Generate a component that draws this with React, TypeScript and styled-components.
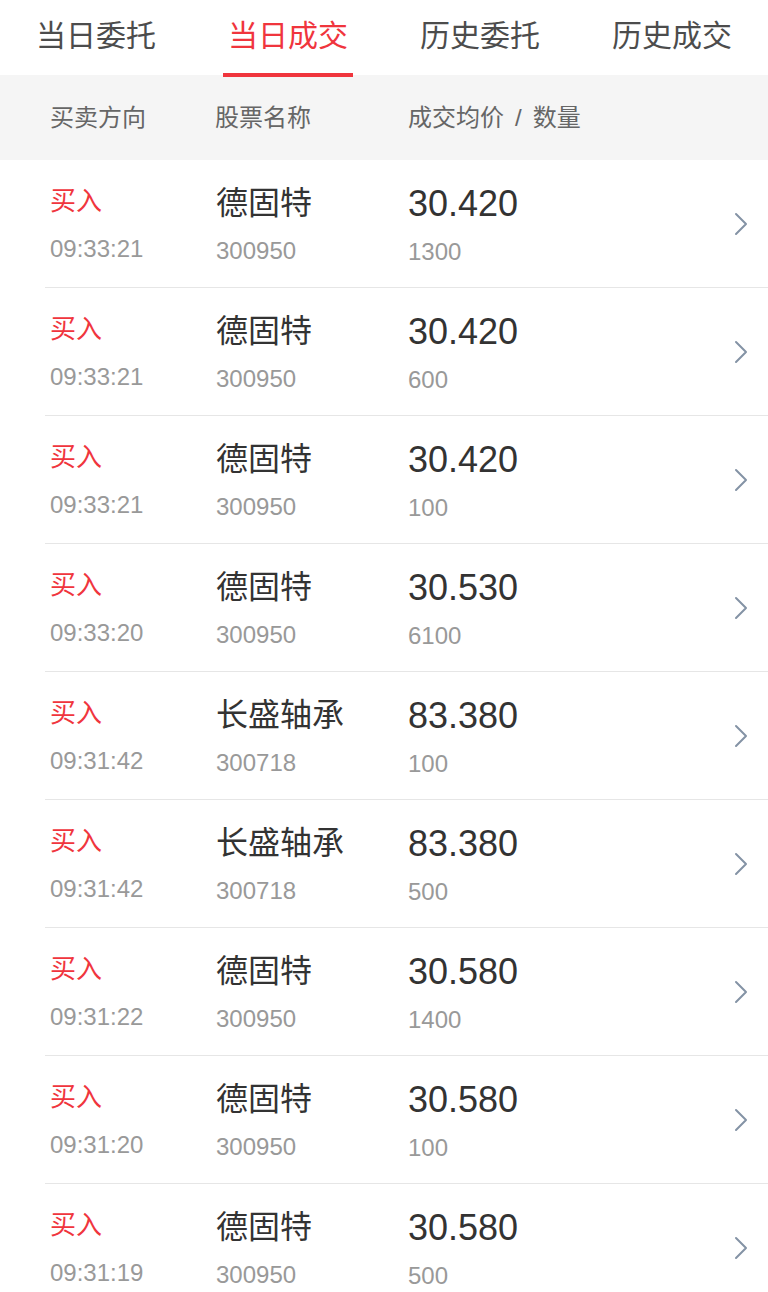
import React, { useState } from "react";
import styled, { createGlobalStyle } from "styled-components";

interface ITrade {
  time: string;
  name: string;
  code: string;
  price: string;
  volume: string;
}

interface ITabLabel {
  active: boolean;
}

const tabs = ["当日委托", "当日成交", "历史委托", "历史成交"];

const trades: ITrade[] = [
  { time: "09:33:21", name: "德固特", code: "300950", price: "30.420", volume: "1300" },
  { time: "09:33:21", name: "德固特", code: "300950", price: "30.420", volume: "600" },
  { time: "09:33:21", name: "德固特", code: "300950", price: "30.420", volume: "100" },
  { time: "09:33:20", name: "德固特", code: "300950", price: "30.530", volume: "6100" },
  { time: "09:31:42", name: "长盛轴承", code: "300718", price: "83.380", volume: "100" },
  { time: "09:31:42", name: "长盛轴承", code: "300718", price: "83.380", volume: "500" },
  { time: "09:31:22", name: "德固特", code: "300950", price: "30.580", volume: "1400" },
  { time: "09:31:20", name: "德固特", code: "300950", price: "30.580", volume: "100" },
  { time: "09:31:19", name: "德固特", code: "300950", price: "30.580", volume: "500" }
];

const App: React.FC = () => {
  const [current, setCurrent] = useState(1);

  return (
    <Page>
      <GlobalStyle />
      <TabBar>
        {tabs.map((t, i) => (
          <Tab key={t} onClick={() => setCurrent(i)}>
            <TabLabel active={i === current}>{t}</TabLabel>
          </Tab>
        ))}
      </TabBar>
      <HeaderRow>
        <HeaderCell>买卖方向</HeaderCell>
        <HeaderCell>股票名称</HeaderCell>
        <HeaderCell>
          成交均价<Slash>/</Slash>数量
        </HeaderCell>
      </HeaderRow>
      <List>
        {trades.map((t, i) => (
          <Row key={i}>
            <Cell>
              <Direction>买入</Direction>
              <Sub>{t.time}</Sub>
            </Cell>
            <Cell>
              <Name>{t.name}</Name>
              <Sub>{t.code}</Sub>
            </Cell>
            <Cell>
              <Price>{t.price}</Price>
              <Sub>{t.volume}</Sub>
            </Cell>
            <Chevron width="14" height="24" viewBox="0 0 14 24">
              <path
                d="M2 2 L12 12 L2 22"
                fill="none"
                stroke="#8493a5"
                strokeWidth="2"
                strokeLinecap="round"
                strokeLinejoin="round"
              />
            </Chevron>
          </Row>
        ))}
      </List>
    </Page>
  );
};

const GlobalStyle = createGlobalStyle`
  html, body {
    margin: 0;
    padding: 0;
    background: #ffffff;
  }
  body {
    font-family: "Liberation Sans", "Noto Sans CJK SC", sans-serif;
    -webkit-font-smoothing: antialiased;
  }
`;

const Page = styled.div({
  width: "768px",
  background: "#ffffff",
  overflow: "hidden"
});

const TabBar = styled.div({
  display: "grid",
  gridTemplateColumns: "repeat(4, 1fr)",
  height: "75px",
  background: "#ffffff"
});

const Tab = styled.div({
  display: "flex",
  justifyContent: "center",
  cursor: "pointer"
});

const TabLabel = styled.div<ITabLabel>(props => ({
  height: "72px",
  boxSizing: "border-box",
  padding: "14px 5px 0",
  fontSize: "30px",
  lineHeight: "34px",
  color: props.active ? "#f0353d" : "#4c4c4c",
  borderBottom: props.active ? "4px solid #f0353d" : "4px solid transparent",
  position: "relative",
  top: "5px"
}));

const HeaderRow = styled.div({
  display: "grid",
  gridTemplateColumns: "165px 193px 1fr",
  alignItems: "center",
  height: "85px",
  paddingLeft: "50px",
  background: "#f5f5f5"
});

const HeaderCell = styled.div({
  fontSize: "24px",
  lineHeight: "30px",
  color: "#666666",
  marginTop: "1px"
});

const Slash = styled.span({
  padding: "0 11px"
});

const List = styled.div({
  display: "flex",
  flexDirection: "column"
});

const Row = styled.div({
  display: "grid",
  gridTemplateColumns: "166px 192px 1fr auto",
  alignItems: "start",
  marginLeft: "45px",
  padding: "24px 20px 21px 5px",
  borderBottom: "1px solid #e6e6e6"
});

const Cell = styled.div({
  display: "flex",
  flexDirection: "column",
  gap: "14px"
});

const Direction = styled.div({
  height: "40px",
  fontSize: "26px",
  lineHeight: "40px",
  color: "#f0353d",
  marginTop: "-3px"
});

const Name = styled.div({
  height: "40px",
  fontSize: "32px",
  lineHeight: "40px",
  color: "#333333",
  marginTop: "-1px"
});

const Price = styled.div({
  height: "40px",
  fontSize: "36px",
  lineHeight: "40px",
  color: "#333333"
});

const Sub = styled.div({
  height: "28px",
  fontSize: "24px",
  lineHeight: "28px",
  color: "#999999"
});

const Chevron = styled.svg({
  alignSelf: "center",
  marginTop: "-2px"
});

export default App;
